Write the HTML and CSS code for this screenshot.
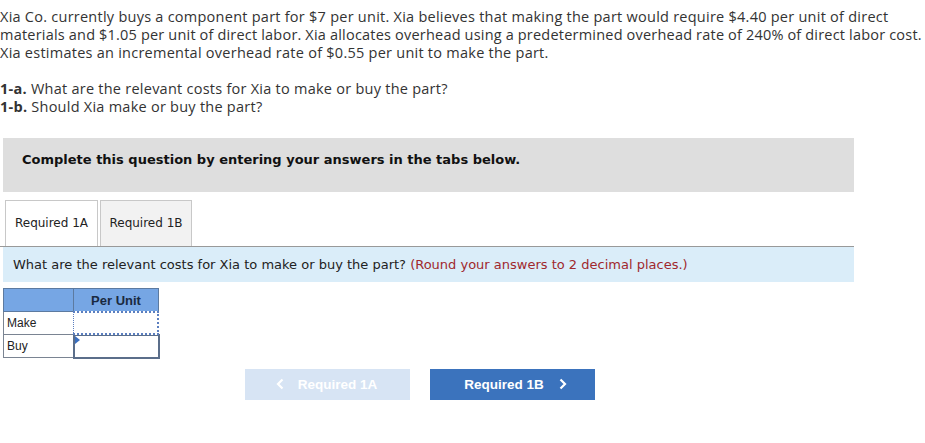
FILE: index.html
```html
<!DOCTYPE html>
<html>
<head>
<meta charset="utf-8">
<link rel="stylesheet" href="styles.css">
</head>
<body>
<div class="page">
  <p class="intro">Xia Co. currently buys a component part for $7 per unit. Xia believes that making the part would require $4.40 per unit of direct<br><span class="tight">materials and $1.05 per unit of direct labor. Xia allocates overhead using a predetermined overhead rate of 240% of direct labor cost.</span><br>Xia estimates an incremental overhead rate of $0.55 per unit to make the part.</p>
  <p class="parts"><b>1-a.</b> What are the relevant costs for Xia to make or buy the part?<br><b>1-b.</b> Should Xia make or buy the part?</p>
  <div class="instr">Complete this question by entering your answers in the tabs below.</div>
  <div class="tabs">
    <div class="tab active">Required 1A</div>
    <div class="tab">Required 1B</div>
  </div>
  <div class="prompt">What are the relevant costs for Xia to make or buy the part? <span class="note">(Round your answers to 2 decimal places.)</span></div>
  <table class="grid">
    <tr class="head"><th class="blank"></th><th>Per Unit</th></tr>
    <tr><td class="lbl">Make</td><td class="inp"><div class="dotbox"></div></td></tr>
    <tr><td class="lbl">Buy</td><td class="inp focus"><span class="tri"></span></td></tr>
  </table>
  <div class="nav">
    <div class="btn prev"><svg class="chev left" width="8" height="12" viewBox="0 0 8 12"><path d="M6.5 1.5 L2 6 L6.5 10.5" fill="none" stroke="#fff" stroke-width="2.2"/></svg>Required 1A</div>
    <div class="btn next">Required 1B<svg class="chev right" width="8" height="12" viewBox="0 0 8 12"><path d="M1.5 1.5 L6 6 L1.5 10.5" fill="none" stroke="#fff" stroke-width="2.2"/></svg></div>
  </div>
</div>
</body>
</html>
```
FILE: styles.css
```css
html, body { margin: 0; padding: 0; background: #fff; }
.page { width: 925px; }
.intro, .parts {
  font-family: "Open Sans", "Liberation Sans", sans-serif;
  font-size: 14.5px;
  letter-spacing: 0.25px;
  line-height: 18px;
  color: #333;
  margin: 0;
  white-space: nowrap;
}
.tight { letter-spacing: 0.22px; word-spacing: -0.2px; }
.intro { padding-top: 8px; }
.parts { margin-top: 18px; }
.parts b { font-weight: 700; }
.instr {
  margin: 22px 71px 0 3px;
  height: 54px;
  background: #dedede;
  font-family: "DejaVu Sans", Verdana, sans-serif;
  font-weight: bold;
  font-size: 13px;
  color: #111;
  padding: 14px 0 0 19px;
  box-sizing: border-box;
}
.tabs {
  display: flex;
  gap: 2px;
  margin: 8px 71px 0 0;
  padding-left: 5px;
  border-bottom: 1px solid #999;
  height: 46px;
}
.tab {
  font-family: "DejaVu Sans", Verdana, sans-serif;
  font-size: 12px;
  color: #222;
  border: 1px solid #c8c8c8;
  border-bottom: none;
  background: #f2f2f2;
  width: 92px;
  box-sizing: border-box;
  display: flex;
  align-items: center;
  justify-content: center;
  padding-bottom: 2px;
}
.tab.active { background: #fff; width: 93px; }
.prompt {
  margin: 0 71px 0 3px;
  height: 35px;
  background: #daedf9;
  font-family: "DejaVu Sans", Verdana, sans-serif;
  font-size: 13px;
  color: #222;
  padding-left: 10px;
  display: flex;
  align-items: center;
  white-space: pre;
}
.note { color: #a0282d; }
.grid {
  margin: 6px 0 0 3px;
  border-collapse: collapse;
  font-family: "Liberation Sans", Arial, sans-serif;
  font-size: 12px;
  color: #222;
}
.grid th, .grid td { padding: 0; }
.head th {
  background: #76a6e4;
  height: 22px;
  border: 1px solid #5c7aa0;
  font-weight: bold;
  font-size: 13px;
  color: #1a2a40;
}
.head th.blank { width: 69px; }
.head th:last-child { width: 84px; }
.lbl {
  border: 1px solid #7a8492;
  height: 22px;
  padding-left: 3px !important;
  text-align: left;
}
.inp { position: relative; border: 1px solid #7a8492; }
.dotbox {
  position: absolute;
  inset: -1px;
  border: 1px dotted #5b7fc0;
  border-width: 2px 2px 2px 1px;
  background: #fff;
}
.inp.focus { border: 2px solid #5b6e8a; }
.tri {
  position: absolute;
  left: 0; top: 0;
  width: 0; height: 0;
  border-top: 4px solid transparent;
  border-bottom: 4px solid transparent;
  border-left: 5px solid #3a6fc0;
}
.nav {
  display: flex;
  gap: 20px;
  margin: 10px 0 0 245px;
}
.btn {
  width: 165px;
  height: 31px;
  display: flex;
  align-items: center;
  justify-content: center;
  font-family: "Liberation Sans", Arial, sans-serif;
  font-weight: bold;
  font-size: 13.5px;
  color: #fff;
  box-sizing: border-box;
}
.btn.prev { background: #d7e4f4; padding-right: 2px; }
.btn.next { background: #3b73bd; padding-left: 6px; }
.chev.left { margin-right: 14px; }
.chev.right { margin-left: 15px; }
```
